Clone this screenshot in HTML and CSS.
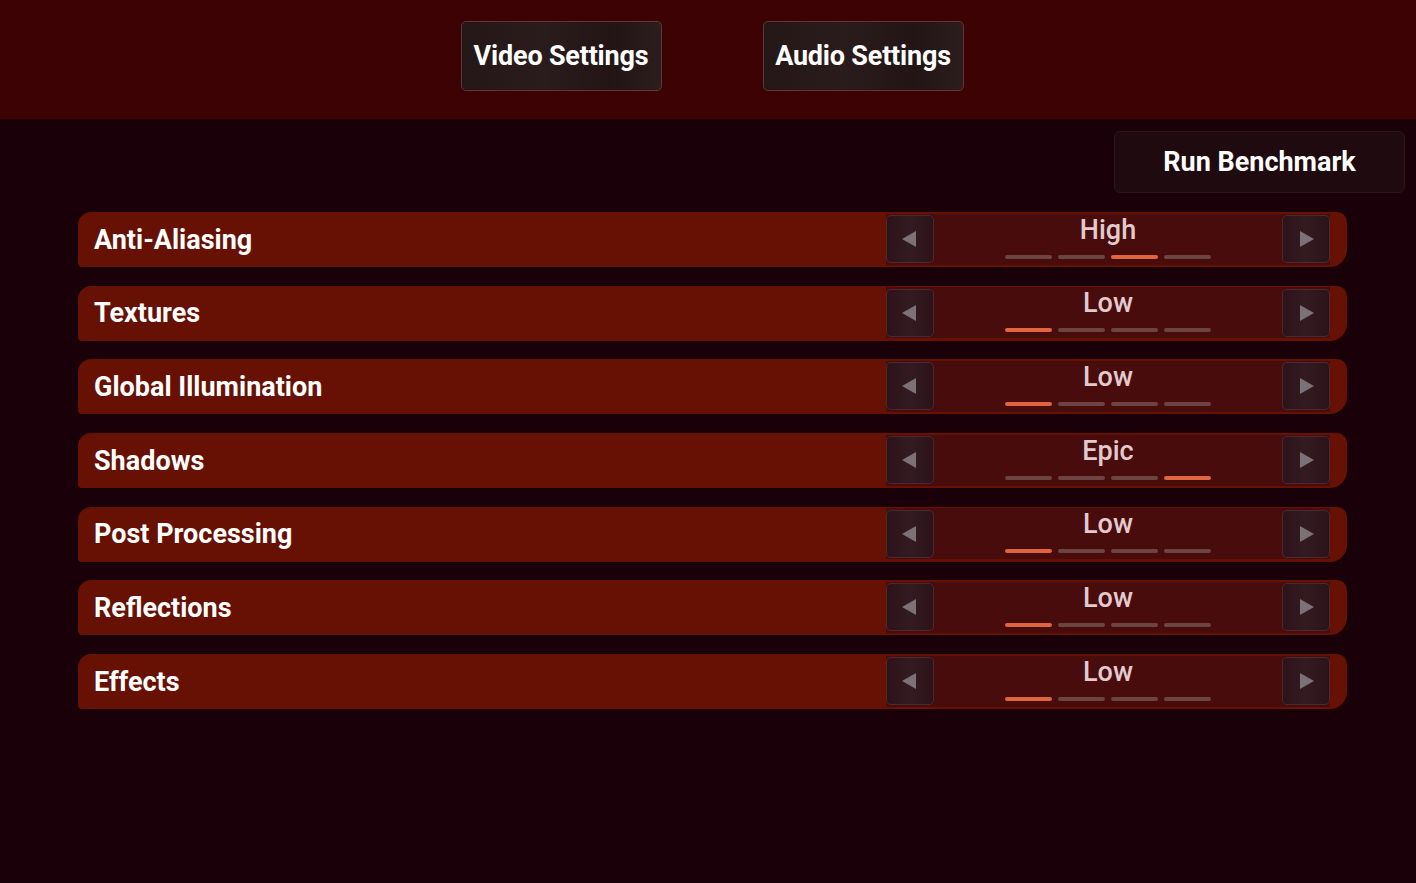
FILE: index.html
```html
<!DOCTYPE html>
<html>
<head>
<meta charset="utf-8">
<link rel="stylesheet" href="styles.css">
</head>
<body>
<header class="topbar">
  <button class="tab">Video Settings</button>
  <button class="tab">Audio Settings</button>
</header>
<main class="content">
  <div class="bench-row">
    <button class="bench">Run Benchmark</button>
  </div>
  <div class="settings">
    <div class="row">
      <span class="label">Anti-Aliasing</span>
      <div class="control">
        <button class="arrow"><span class="tri-left"></span></button>
        <div class="value"><span class="value-text">High</span><div class="levels"><i></i><i></i><i class="on"></i><i></i></div></div>
        <button class="arrow"><span class="tri-right"></span></button>
      </div>
    </div>
    <div class="row">
      <span class="label">Textures</span>
      <div class="control">
        <button class="arrow"><span class="tri-left"></span></button>
        <div class="value"><span class="value-text">Low</span><div class="levels"><i class="on"></i><i></i><i></i><i></i></div></div>
        <button class="arrow"><span class="tri-right"></span></button>
      </div>
    </div>
    <div class="row">
      <span class="label">Global Illumination</span>
      <div class="control">
        <button class="arrow"><span class="tri-left"></span></button>
        <div class="value"><span class="value-text">Low</span><div class="levels"><i class="on"></i><i></i><i></i><i></i></div></div>
        <button class="arrow"><span class="tri-right"></span></button>
      </div>
    </div>
    <div class="row">
      <span class="label">Shadows</span>
      <div class="control">
        <button class="arrow"><span class="tri-left"></span></button>
        <div class="value"><span class="value-text">Epic</span><div class="levels"><i></i><i></i><i></i><i class="on"></i></div></div>
        <button class="arrow"><span class="tri-right"></span></button>
      </div>
    </div>
    <div class="row">
      <span class="label">Post Processing</span>
      <div class="control">
        <button class="arrow"><span class="tri-left"></span></button>
        <div class="value"><span class="value-text">Low</span><div class="levels"><i class="on"></i><i></i><i></i><i></i></div></div>
        <button class="arrow"><span class="tri-right"></span></button>
      </div>
    </div>
    <div class="row">
      <span class="label">Reflections</span>
      <div class="control">
        <button class="arrow"><span class="tri-left"></span></button>
        <div class="value"><span class="value-text">Low</span><div class="levels"><i class="on"></i><i></i><i></i><i></i></div></div>
        <button class="arrow"><span class="tri-right"></span></button>
      </div>
    </div>
    <div class="row">
      <span class="label">Effects</span>
      <div class="control">
        <button class="arrow"><span class="tri-left"></span></button>
        <div class="value"><span class="value-text">Low</span><div class="levels"><i class="on"></i><i></i><i></i><i></i></div></div>
        <button class="arrow"><span class="tri-right"></span></button>
      </div>
    </div>
  </div>
</main>
</body>
</html>
```

FILE: styles.css
```css
* { box-sizing: border-box; }
html, body { margin: 0; padding: 0; }
body {
  width: 1416px;
  height: 883px;
  overflow: hidden;
  background: #1a0008;
  font-family: Roboto, "Liberation Sans", sans-serif;
  color: #ffffff;
}
button { font-family: inherit; cursor: pointer; }

.topbar {
  height: 119px;
  background: #3d0204;
  display: flex;
  justify-content: center;
  align-items: flex-start;
  gap: 101px;
  padding-top: 21px;
  padding-left: 8px;
}
.tab {
  width: 201px;
  height: 70px;
  border: 1px solid #5c3a30;
  border-radius: 5px;
  background: linear-gradient(90deg, #251617 0%, #2a1c1c 40%, #231515 75%, #2b1d1d 100%);
  color: #ffffff;
  font-size: 27px;
  font-weight: 700;
  padding: 0;
  letter-spacing: -0.2px;
}

.content { padding: 12px 11px 0 78px; }
.bench-row { display: flex; justify-content: flex-end; }
.bench {
  width: 291px;
  height: 62px;
  border: 1px solid #2c141a;
  border-radius: 6px;
  background: #1f0a0f;
  color: #ffffff;
  font-size: 27px;
  font-weight: 700;
  padding: 0;
}

.settings {
  margin-top: 19px;
  margin-right: 58px;
  display: flex;
  flex-direction: column;
  gap: 18.7px;
}
.row {
  height: 55px;
  background: #661103;
  border-radius: 13px 10px 17px 4px;
  display: flex;
  align-items: center;
  justify-content: space-between;
  padding-left: 16px;
  padding-right: 17px;
}
.label {
  font-size: 27px;
  font-weight: 700;
  color: #ffffff;
}
.control {
  width: 444px;
  height: 51px;
  margin-top: -1px;
  background: #480c0c;
  display: flex;
  align-items: center;
  justify-content: space-between;
}
.arrow {
  width: 48px;
  height: 48px;
  border: 1px solid #4a2a30;
  border-radius: 5px;
  background: linear-gradient(90deg, #2c1319 0%, #341a21 50%, #2c1319 100%);
  display: flex;
  align-items: center;
  justify-content: center;
  padding: 0;
}
.tri-left, .tri-right {
  width: 0; height: 0;
  border-top: 8px solid transparent;
  border-bottom: 8px solid transparent;
}
.tri-left { border-right: 14px solid #7a7276; margin-right: 2px; }
.tri-right { border-left: 14px solid #7a7276; margin-left: 2px; }

.value {
  flex: 1;
  align-self: stretch;
  display: flex;
  flex-direction: column;
  align-items: center;
  padding-top: 3px;
}
.value-text {
  font-size: 27px;
  font-weight: 500;
  color: #e2cace;
  line-height: 27px;
}
.levels {
  display: flex;
  gap: 6px;
  margin-top: 11px;
}
.levels i {
  display: block;
  width: 47px;
  height: 4px;
  border-radius: 2px;
  background: #6c4442;
}
.levels i.on { background: #e0653e; }
```
